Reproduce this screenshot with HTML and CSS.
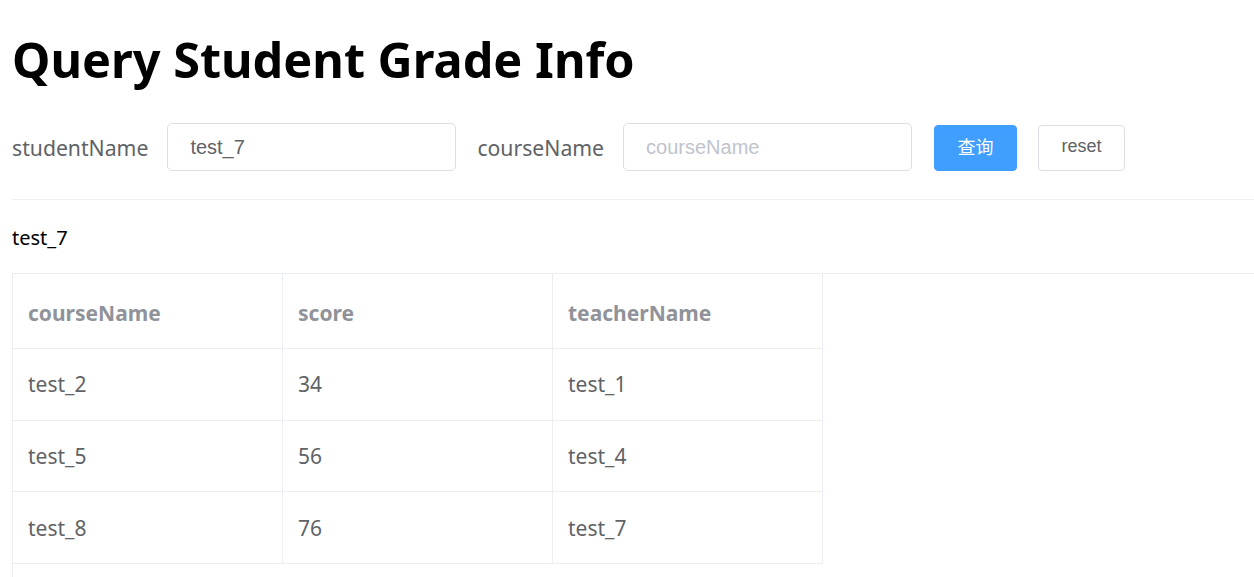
FILE: index.html
```html
<!DOCTYPE html>
<html>
<head>
<meta charset="utf-8">
<link rel="stylesheet" href="styles.css">
</head>
<body>
<div class="page">
  <h1 class="title">Query Student Grade Info</h1>
  <form class="query-form">
    <label class="form-label">studentName</label>
    <input class="form-input" type="text" value="test_7">
    <label class="form-label label-second">courseName</label>
    <input class="form-input" type="text" placeholder="courseName">
    <button type="button" class="btn btn-primary">查询</button>
    <button type="button" class="btn btn-default">reset</button>
  </form>
  <div class="divider"></div>
  <div class="student">test_7</div>
  <div class="table-wrap">
    <table class="grade-table">
      <thead>
        <tr><th>courseName</th><th>score</th><th>teacherName</th></tr>
      </thead>
      <tbody>
        <tr><td>test_2</td><td>34</td><td>test_1</td></tr>
        <tr><td>test_5</td><td>56</td><td>test_4</td></tr>
        <tr><td>test_8</td><td>76</td><td>test_7</td></tr>
      </tbody>
    </table>
  </div>
</div>
</body>
</html>
```
FILE: styles.css
```css
html, body {
  margin: 0;
  padding: 0;
  background: #fff;
  overflow: hidden;
}
body {
  font-family: "Noto Sans", "Open Sans", sans-serif;
  color: #000;
}
.page {
  padding-left: 12px;
}
.title {
  margin: 0;
  padding-top: 26px;
  font-size: 48.6px;
  line-height: 66px;
  font-weight: 700;
  color: #000;
}
.query-form {
  display: flex;
  align-items: center;
  margin-top: 31px;
  height: 48px;
}
.form-label {
  font-size: 21.2px;
  color: #606266;
  margin-right: 19px;
}
.label-second {
  margin-left: 21px;
}
.form-input {
  box-sizing: border-box;
  width: 289px;
  height: 48px;
  border: 1px solid #dcdfe6;
  border-radius: 5px;
  padding: 0 22px;
  font-family: "Liberation Sans", Arial, sans-serif;
  font-size: 20px;
  color: #606266;
  outline: none;
}
.form-input::placeholder {
  color: #c0c4cc;
}
.btn {
  box-sizing: border-box;
  height: 46px;
  margin-top: 1px;
  padding: 0 0 3px;
  border-radius: 4px;
  font-size: 18px;
  font-family: "Liberation Sans", "Noto Sans CJK SC", sans-serif;
  cursor: pointer;
}
.btn-primary {
  margin-left: 22px;
  width: 83px;
  background: #409eff;
  border: 1px solid #409eff;
  color: #fff;
}
.btn-default {
  margin-left: 21px;
  width: 87px;
  background: #fff;
  border: 1px solid #dcdfe6;
  color: #606266;
}
.divider {
  margin-top: 28px;
  height: 1px;
  background: #ebeef5;
}
.student {
  margin-top: 24px;
  font-size: 20px;
  line-height: 28px;
  color: #000;
}
.table-wrap {
  margin-top: 21px;
  border-top: 1px solid #ebeef5;
  border-left: 1px solid #ebeef5;
  height: 400px;
}
.grade-table {
  border-collapse: separate;
  border-spacing: 0;
  table-layout: fixed;
  width: 810px;
}
.grade-table th,
.grade-table td {
  width: 270px;
  box-sizing: border-box;
  padding: 0 15px;
  text-align: left;
  border-right: 1px solid #ebeef5;
  border-bottom: 1px solid #ebeef5;
  font-size: 21px;
}
.grade-table th {
  height: 75px;
  padding-top: 3px;
  font-weight: 700;
  color: #909399;
}
.grade-table td {
  height: 71.7px;
  color: #606266;
}
```
